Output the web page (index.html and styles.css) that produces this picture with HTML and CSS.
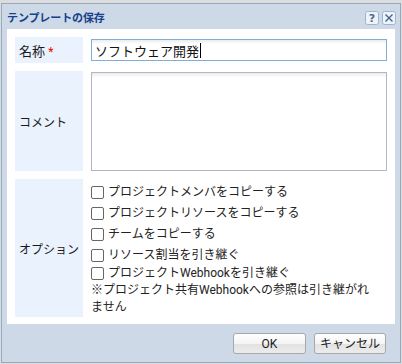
FILE: index.html
```html
<!DOCTYPE html>
<html lang="ja">
<head>
<meta charset="utf-8">
<title>テンプレートの保存</title>
<link rel="stylesheet" href="styles.css">
</head>
<body>
<div class="win">
  <div class="head">
    <span class="title">テンプレートの保存</span>
    <div class="tools">
      <span class="tool">
        <svg width="14" height="14" viewBox="0 0 14 14"><rect x="0.5" y="0.5" width="13" height="13" rx="2" fill="#eef3fa" stroke="#9fb4cf"/><text x="7" y="11.2" text-anchor="middle" font-family="DejaVu Sans, sans-serif" font-weight="bold" font-size="11" fill="#4a6a93">?</text></svg>
      </span>
      <span class="tool">
        <svg width="14" height="14" viewBox="0 0 14 14"><rect x="0.5" y="0.5" width="13" height="13" rx="2" fill="#eef3fa" stroke="#9fb4cf"/><path d="M3.5 3.5 L10.5 10.5 M10.5 3.5 L3.5 10.5" stroke="#3d5f8c" stroke-width="1.3" fill="none"/></svg>
      </span>
    </div>
  </div>
  <div class="body">
    <table class="form">
      <tr class="r-name">
        <th class="lbl">名称 <span class="req">*</span></th>
        <td><div class="input"><span class="val">ソフトウェア開発</span><span class="caret"></span></div></td>
      </tr>
      <tr class="r-comment">
        <th class="lbl">コメント</th>
        <td><div class="textarea"></div></td>
      </tr>
      <tr class="r-opt">
        <th class="lbl">オプション</th>
        <td>
          <div class="opts">
            <div class="opt"><span class="cb"></span>プロジェクトメンバをコピーする</div>
            <div class="opt"><span class="cb"></span>プロジェクトリソースをコピーする</div>
            <div class="opt"><span class="cb"></span>チームをコピーする</div>
            <div class="opt o4"><span class="cb"></span>リソース割当を引き継ぐ</div>
            <div class="opt o5"><span class="cb"></span>プロジェクトWebhookを引き継ぐ</div>
            <div class="note">※プロジェクト共有Webhookへの参照は引き継がれ<br>ません</div>
          </div>
        </td>
      </tr>
    </table>
  </div>
  <div class="foot">
    <button class="btn b-ok">OK</button>
    <button class="btn b-cancel">キャンセル</button>
  </div>
</div>
</body>
</html>
```
FILE: styles.css
```css
html, body {
  margin: 0;
  padding: 0;
}
body {
  background: #dcdcdc;
  width: 402px;
  height: 364px;
  overflow: hidden;
  font-family: Roboto, "Noto Sans CJK JP", sans-serif;
  font-size: 12px;
  color: #222;
}
.win {
  margin: 3px 0 0 1px;
  width: 398px;
  height: 358px;
  border: 1px solid #97a8c1;
  background: #cdd9e7;
  display: flex;
  flex-direction: column;
}
.head {
  height: 25px;
  display: flex;
  align-items: center;
  justify-content: space-between;
  padding: 0 4px 0 5px;
}
.title {
  font-weight: bold;
  font-size: 11px;
  color: #15428b;
  letter-spacing: -0.1px;
}
.tools {
  display: flex;
  gap: 3px;
  margin-top: 2px;
}
.tool {
  display: block;
  width: 14px;
  height: 14px;
}
.tool svg {
  display: block;
}
.body {
  margin: 0 5px;
  background: #fff;
  height: 295px;
}
.form {
  border-spacing: 8px;
  border-collapse: separate;
  width: 100%;
}
.lbl {
  width: 64px;
  background: #eaf2fd;
  text-align: left;
  font-weight: normal;
  padding: 0 0 0 4px;
  vertical-align: middle;
  white-space: nowrap;
  color: #1a1a1a;
}
.form td {
  padding: 0;
  vertical-align: middle;
}
.r-name .lbl { height: 26px; font-size: 13px; }
.r-comment .lbl { height: 98px; }
.r-opt .lbl { height: 138px; }
.req {
  color: #e00;
  font-size: 12px;
}
.input {
  box-sizing: border-box;
  width: 296px;
  height: 22px;
  border: 1px solid #7eadd9;
  background: linear-gradient(#ececec, #fff 4px);
  display: flex;
  align-items: center;
  padding-left: 3px;
  font-size: 13px;
  color: #111;
}
.caret {
  display: inline-block;
  width: 1px;
  height: 15px;
  background: #000;
  margin-left: 1px;
}
.textarea {
  box-sizing: border-box;
  width: 296px;
  height: 99px;
  border: 1px solid #b3b5c3;
  background: linear-gradient(#ececec, #fff 5px);
  margin-top: 1px;
}
.opts {
  padding-top: 3px;
  line-height: 17px;
  color: #222;
}
.opt {
  display: flex;
  align-items: center;
  margin-bottom: 4px;
}
.opt.o4 { margin-bottom: 1px; }
.opt.o5 { margin-bottom: 0; }
.cb {
  box-sizing: border-box;
  width: 13px;
  height: 13px;
  border: 1px solid #666;
  border-radius: 2px;
  background: #fff;
  margin-right: 4px;
  flex: none;
}
.foot {
  flex: 1;
  display: flex;
  justify-content: flex-end;
  align-items: flex-start;
  padding: 9px 14px 0 0;
  gap: 8px;
}
.btn {
  box-sizing: border-box;
  height: 21px;
  border: 1px solid #a8a8a8;
  border-radius: 3px;
  background: linear-gradient(#ffffff, #f4f4f4 50%, #e2e2e2 52%, #ececec);
  font-family: Roboto, "Noto Sans CJK JP", sans-serif;
  font-size: 12px;
  color: #222;
  padding: 0;
  line-height: 18px;
}
.b-ok { width: 73px; }
.b-cancel { width: 72px; }
```
